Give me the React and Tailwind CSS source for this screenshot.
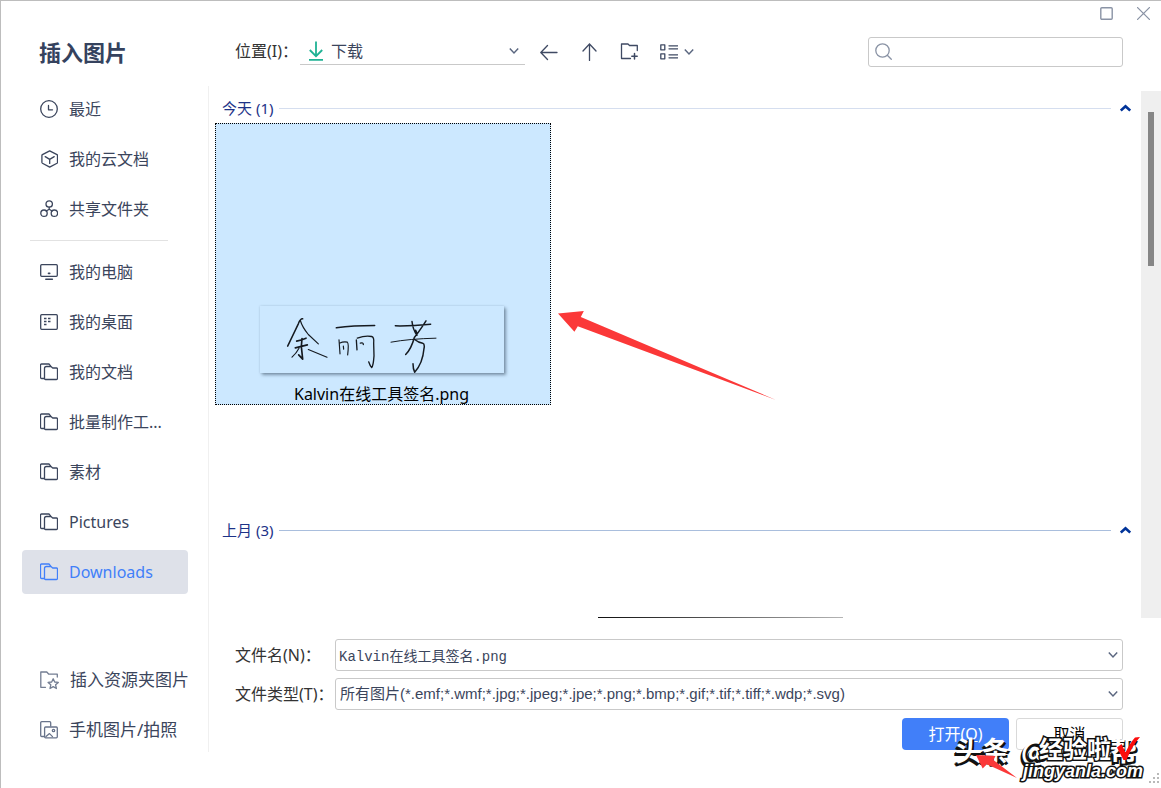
import React from "react";

const UI = "font-['Noto_Sans','Noto_Sans_CJK_SC',sans-serif]";

function Icon({ children, className = "", box = "0 0 18 18", size = "size-[18px]" }) {
  return (
    <svg
      viewBox={box}
      fill="none"
      stroke="currentColor"
      strokeWidth="1.3"
      strokeLinecap="round"
      strokeLinejoin="round"
      aria-hidden="true"
      className={`${size} shrink-0 ${className}`}
    >
      {children}
    </svg>
  );
}

const ClockIcon = () => (
  <Icon>
    <circle cx="9" cy="9" r="8.3" />
    <path d="M8.5 5.5v4.3h4" />
  </Icon>
);

const CubeIcon = () => (
  <Icon>
    <path d="M9.7 .8 17 4.6a1 1 0 0 1 .5.9v6.8a1 1 0 0 1-.5.9L9.7 17.1 2.4 13.2a1 1 0 0 1-.5-.9V5.5a1 1 0 0 1 .5-.9Z" />
    <path d="M5.2 6.6 9.7 9.4l4.5-2.8M9.7 9.4v4" />
  </Icon>
);

const ShareIcon = () => (
  <Icon>
    <circle cx="9.2" cy="4" r="3.2" />
    <circle cx="4" cy="13.2" r="3.2" />
    <circle cx="14.4" cy="13.2" r="3.2" />
    <path d="M9.2 7.2v2L6.3 11M9.2 9.2l2.9 1.8" />
  </Icon>
);

const ComputerIcon = () => (
  <Icon>
    <rect x=".7" y="1.7" width="16.6" height="11.6" rx="1" />
    <path d="M5.8 16.2h6.6" strokeWidth="1.5" />
    <path d="M8.5 10.4h1.2" strokeWidth="1.6" />
  </Icon>
);

const DesktopIcon = () => (
  <Icon>
    <rect x=".7" y="1.7" width="16.6" height="14.6" rx="1" />
    <path d="M4 5.500h2.500M8 5.500h2.500M4 8.500h2.500M8 8.500h2.500M4 11.500h2.500" strokeLinecap="butt" strokeWidth="1.5" />
  </Icon>
);

const FolderIcon = () => (
  <Icon>
    <path d="M4 15.500H1.500a1 1 0 0 1-1-1V2a1 1 0 0 1 1-1H9l1.500 1.800" />
    <path d="M5.500 16.500h11a1 1 0 0 0 1-1V6a1 1 0 0 0-1-1h-3.800L11 3.500H6.500c-1.200 0-2 .8-2 2v10a1 1 0 0 0 1 1Z" />
  </Icon>
);

const FolderStarIcon = () => (
  <Icon box="0 0 19 19" size="size-[19px]" className="text-[#737d92]">
    <path d="M5.500 16.300H.8V1h6l2 2.200h8.500V6" />
    <path d="m13.200 7.800 1.500 3.200 3.600.4-2.700 2.400.8 3.700-3.200-1.900L10 17.500l.8-3.700-2.700-2.400 3.600-.4Z" />
  </Icon>
);

const PhonePictureIcon = () => (
  <Icon className="text-[#68738a]">
    <path d="M4 15.500H1.700a1 1 0 0 1-1-1V1.700a1 1 0 0 1 1-1h8a1 1 0 0 1 1 1V5" />
    <rect x="4.600" y="6" width="12.700" height="10.800" rx="1" />
    <circle cx="13.500" cy="9.500" r="1.200" />
    <path d="m6 15.600 3.500-3 3 3" />
  </Icon>
);

function Chevron({ className = "" }) {
  return (
    <svg viewBox="0 0 10 6" fill="none" stroke="#5b6780" strokeWidth="1.5" aria-hidden="true" className={`h-[6px] w-[10px] ${className}`}>
      <path d="M.8 .6 5 4.900 9.200 .6" />
    </svg>
  );
}

const places = [
  ["最近", ClockIcon],
  ["我的云文档", CubeIcon],
  ["共享文件夹", ShareIcon],
];

const folders = [
  ["我的电脑", ComputerIcon],
  ["我的桌面", DesktopIcon],
  ["我的文档", FolderIcon],
  ["批量制作工...", FolderIcon],
  ["素材", FolderIcon],
  ["Pictures", FolderIcon],
  ["Downloads", FolderIcon],
];

const extras = [
  ["插入资源夹图片", FolderStarIcon],
  ["手机图片/拍照", PhonePictureIcon],
];

function PlaceList({ items, active, large }) {
  return (
    <ul className="flex flex-col gap-1.5">
      {items.map(([label, Glyph]) => (
        <li key={label}>
          <button
            type="button"
            className={`flex h-11 w-full items-center gap-[11px] rounded-sm pl-[18px] text-left whitespace-nowrap ${
              large ? "text-[17px]" : "text-base"
            } ${label === active ? "bg-[#dee1e9] text-[#417ff9]" : "text-[#3b455c]"}`}
          >
            <Glyph />
            {label}
          </button>
        </li>
      ))}
    </ul>
  );
}

function Sidebar() {
  return (
    <aside className="flex w-[208px] shrink-0 flex-col">
      <h1 className="flex h-[85px] items-center pt-[17px] pl-[38px] text-[22px] font-bold text-[#35425e]">插入图片</h1>
      <nav aria-label="位置" className="mb-9 flex flex-1 flex-col border-r border-[#f0f0f0] pt-px pl-[21px]">
        <div className="w-[166px]">
          <PlaceList items={places} />
          <hr className="mt-[9px] mr-5 mb-[9px] ml-2 border-[#e2e2e2]" />
          <PlaceList items={folders} active="Downloads" />
        </div>
        <div className="mt-auto w-[180px]">
          <PlaceList items={extras} large />
        </div>
      </nav>
    </aside>
  );
}

function TitleButtons() {
  return (
    <div className="flex h-6 items-center justify-end gap-6 pr-[11px] text-[#8a93a5]">
      <button type="button" aria-label="最大化">
        <Icon box="0 0 13 13" size="size-[13px]">
          <rect x=".8" y=".8" width="11.400" height="11.400" rx="1" strokeWidth="1.400" />
        </Icon>
      </button>
      <button type="button" aria-label="关闭">
        <Icon box="0 0 13 13" size="size-[13px]">
          <path d="m.6.6 11.800 11.800M12.400.6.6 12.400" />
        </Icon>
      </button>
    </div>
  );
}

function Toolbar() {
  return (
    <div className="flex items-start pt-3 pr-[38px] pl-[26px] text-[#3f4a63]">
      <label htmlFor="location" className="w-[65px] text-base leading-7 whitespace-nowrap text-[#333]">
        位置(I)：
      </label>
      <div className="relative w-[225px]">
        <svg viewBox="0 0 16 20" fill="none" stroke="#1fb294" strokeWidth="1.800" aria-hidden="true" className="pointer-events-none absolute top-1 left-2 h-5 w-4">
          <path d="M8 .5v14M1.800 9 8 15.200 14.200 9M1 18.800h14" />
        </svg>
        <select id="location" className="h-7 w-full appearance-none border-b border-[#c9c9c9] bg-transparent pl-[31px] text-base leading-6 text-[#3b455c]">
          <option>下载</option>
        </select>
        <Chevron className="pointer-events-none absolute top-[11px] right-1.5" />
      </div>
      <div className="ml-[15px] flex items-center gap-[22px] self-center">
        <button type="button" aria-label="后退">
          <Icon>
            <path d="M17 9.500H1M7.500 2.500.8 9.500l6.700 7" />
          </Icon>
        </button>
        <button type="button" aria-label="向上">
          <Icon>
            <path d="M9.500 17.500V1M3 8l6.500-7L16 8" />
          </Icon>
        </button>
        <button type="button" aria-label="新建文件夹">
          <Icon>
            <path d="M10.500 15.500H1.500V1H8l1.500 1.500h7.800V7.500" />
            <path d="M14.500 10.500v5.400M11.800 13.200h5.400" strokeWidth="1.500" />
          </Icon>
        </button>
        <button type="button" aria-label="视图" className="flex items-center gap-1.5">
          <Icon>
            <rect x=".8" y="1.800" width="4" height="5" />
            <rect x=".8" y="10.800" width="4" height="5" />
            <path d="M9 2.800h8.500M9 5.800h8.500M9 11.800h8.500M9 14.800h8.500" />
          </Icon>
          <Chevron />
        </button>
      </div>
      <div className="relative ml-auto w-[255px]">
        <Icon className="pointer-events-none absolute top-1.5 left-[7px] text-[#8a93a5]">
          <circle cx="7.500" cy="7.500" r="6.700" />
          <path d="m12.300 12.300 4 4" />
        </Icon>
        <input type="search" aria-label="搜索" className="block h-[30px] w-full rounded-[3px] border border-[#c9c9c9] bg-white pl-8 text-base" />
      </div>
    </div>
  );
}

function GroupHeader({ label, tone }) {
  return (
    <div className="flex h-6 items-center gap-1.5 pl-[7px] pr-2.5">
      <h2 className="text-[15px] leading-6 whitespace-nowrap text-[#1d3388]">{label}</h2>
      <span className={`h-px flex-1 ${tone}`} />
      <button type="button" aria-label={`折叠 ${label}`} className="ml-[3px] text-[#003399]">
        <svg viewBox="0 0 11 8" fill="none" stroke="currentColor" strokeWidth="2.600" aria-hidden="true" className="h-2 w-[11px]">
          <path d="M.8 6.500 5.500 2.200 10.200 6.500" />
        </svg>
      </button>
    </div>
  );
}

function Signature() {
  return (
    <svg
      viewBox="147 78 732 198"
      fill="none"
      stroke="#151a20"
      strokeWidth="4.500"
      strokeLinecap="round"
      strokeLinejoin="round"
      role="img"
      aria-label="签名预览"
      className="h-[67px] w-[244px] bg-[#cce8ff] shadow-[2px_2px_3px_rgba(60,80,100,0.55),0_0_2px_rgba(60,80,100,0.2)]"
    >
      <path d="M275 115q-7-1-13 15l-32 67" />
      <path d="M268 120q6 20 24 42l30 28" strokeWidth="3.500" />
      <path d="M257 182q14-3 28-9M253 202l36-9M273 174l-2 24 4 38-12-13" strokeWidth="5" />
      <path d="M264 203q-8 15-21 27M292 207l56 23" strokeWidth="3.500" />
      <path d="M376 142q50-7 115-7" />
      <path d="M384 178l3 42M385 188q14-6 24-3 5 4 1 38M397 197l1 9" strokeWidth="3.500" />
      <path d="M436 178l2 30M439 173q24-9 43-5 8 2 6 20l1 38q-2 30-7 35-5-5-9-17M448 188q9-3 9 4" strokeWidth="4" />
      <path d="M553 136q48 1 106-5M603 123q3 26 15 41M645 121q-22 34-35 50-9 34-26 51M614 149l3 8" />
      <path d="M540 185q54-10 135-12" strokeWidth="3" />
      <path d="M611 177q12 10 24 11 7 3 4 16-4 45-28 71-5-10-5-25" />
    </svg>
  );
}

function FileList() {
  return (
    <div className="flex min-h-[527px] flex-1">
      <div className="flex min-w-0 flex-1 flex-col pt-[5px] pl-1.5">
        <section className="h-[422px]">
          <GroupHeader label="今天 (1)" tone="bg-[#d5deef]" />
          <ul className="mt-[3px]">
            <li className="relative flex h-[282px] w-[336px] flex-col items-center justify-end border border-dotted border-black bg-[#cce8ff] pr-[3px]">
              <Signature />
              <span className="mt-[11px] text-base leading-5 text-black">Kalvin在线工具签名.png</span>
              <svg viewBox="55 63 650 265" aria-hidden="true" className="absolute top-[187px] left-[342px] h-[89px] w-[218px]">
                <path d="M55 70 132 63 123 81 705 328 114 108 104 125Z" fill="#fb3838" />
              </svg>
            </li>
          </ul>
        </section>
        <section className="flex flex-1 flex-col">
          <GroupHeader label="上月 (3)" tone="bg-[#a9bedd]" />
          <div className="mt-auto ml-[383px] h-px w-[245px] bg-linear-to-r from-[#111] to-[#b5b5b5]" />
        </section>
      </div>
      <div className="w-5 shrink-0 bg-[#efefef] pt-[21px] pl-[7px]">
        <div className="h-[154px] w-1.5 bg-[#868686]" />
      </div>
    </div>
  );
}

function SaveForm() {
  return (
    <form className="flex flex-col gap-[7px] pt-[21px] pr-[38px] pb-[38px] pl-[26px]" onSubmit={(e) => e.preventDefault()}>
      <div className="flex items-center">
        <label htmlFor="filename" className="w-[100px] text-base whitespace-nowrap text-[#333]">
          文件名(N)：
        </label>
        <div className="relative flex-1">
          <input
            id="filename"
            defaultValue="Kalvin在线工具签名.png"
            className="block h-8 w-full rounded-[3px] border border-[#c9c9c9] bg-white pl-[3px] font-['Liberation_Mono','Noto_Sans_CJK_SC',monospace] text-sm text-[#3b455c]"
          />
          <Chevron className="pointer-events-none absolute top-[13px] right-[5px]" />
        </div>
      </div>
      <div className="flex items-center">
        <label htmlFor="filetype" className="w-[100px] text-base whitespace-nowrap text-[#333]">
          文件类型(T)：
        </label>
        <div className="relative flex-1">
          <select
            id="filetype"
            className="block h-8 w-full appearance-none rounded-[3px] border border-[#c9c9c9] bg-white pl-1 font-['Liberation_Sans','Noto_Sans_CJK_SC',sans-serif] text-[15px] text-[#3b455c]"
          >
            <option>所有图片(*.emf;*.wmf;*.jpg;*.jpeg;*.jpe;*.png;*.bmp;*.gif;*.tif;*.tiff;*.wdp;*.svg)</option>
          </select>
          <Chevron className="pointer-events-none absolute top-[13px] right-[5px]" />
        </div>
      </div>
      <div className="flex justify-end gap-[7px] pt-px">
        <button type="submit" className="h-8 w-[107px] rounded-sm bg-[#417ff9] text-base text-white">
          打开(<u>O</u>)
        </button>
        <button type="button" className="h-8 w-[107px] rounded-[3px] border border-[#d9d9d9] bg-white text-base text-black">
          取消
        </button>
      </div>
    </form>
  );
}

function Watermark() {
  return (
    <div className="pointer-events-none absolute right-0 bottom-0 h-[60px] w-[210px] font-['Noto_Sans_CJK_SC',sans-serif] leading-none font-bold whitespace-nowrap text-white">
      <span className="absolute top-2 left-1 flex gap-3 text-[27px] [text-shadow:-1px_2px_0_#111,-2px_3px_0_#111,2px_2px_0_#111]">
        <span>头条</span>
        <span>@</span>
      </span>
      <span className="absolute top-2 left-[159px] text-[27px] [text-shadow:-1px_2px_0_#111,-2px_3px_0_#111,2px_2px_0_#111]">帮</span>
      <span className="absolute top-2 left-[88px] text-[24px] [-webkit-text-stroke:3px_#111] [paint-order:stroke_fill]">经验啦</span>
      <svg viewBox="0 0 24 26" aria-hidden="true" className="absolute top-2 left-[165px] h-[26px] w-6">
        <path d="M1 11.500 5.500 8l4 8.500Q14 7 19 1.500L24 1Q16 10 10.500 24H7.500Z" fill="#fb0d0d" />
      </svg>
      <svg viewBox="290 465 122 68" aria-hidden="true" className="absolute top-[27px] left-[25px] h-[23px] w-[41px]">
        <path d="M290 465 348 468 342 480 412 533 322 492 310 505Z" fill="#fb3838" />
      </svg>
      <span className="absolute top-[34px] left-[72px] font-['Liberation_Sans',sans-serif] text-[18px] italic [-webkit-text-stroke:3px_#111] [paint-order:stroke_fill]">
        jingyanla.com
      </span>
      <svg viewBox="0 0 11 11" fill="#b9b9b9" aria-hidden="true" className="absolute right-px bottom-1 size-[11px]">
        <path d="M8 0h2v2H8zM4 4h2v2H4zM8 4h2v2H8zM0 8h2v2H0zM4 8h2v2H4zM8 8h2v2H8z" />
      </svg>
    </div>
  );
}

export default function App() {
  return (
    <div className={`relative flex min-h-screen border-t border-l border-[#bdbdbd] bg-white ${UI}`}>
      <Sidebar />
      <main className="flex min-w-0 flex-1 flex-col">
        <TitleButtons />
        <Toolbar />
        <div className="h-6" />
        <FileList />
        <SaveForm />
      </main>
      <Watermark />
    </div>
  );
}
